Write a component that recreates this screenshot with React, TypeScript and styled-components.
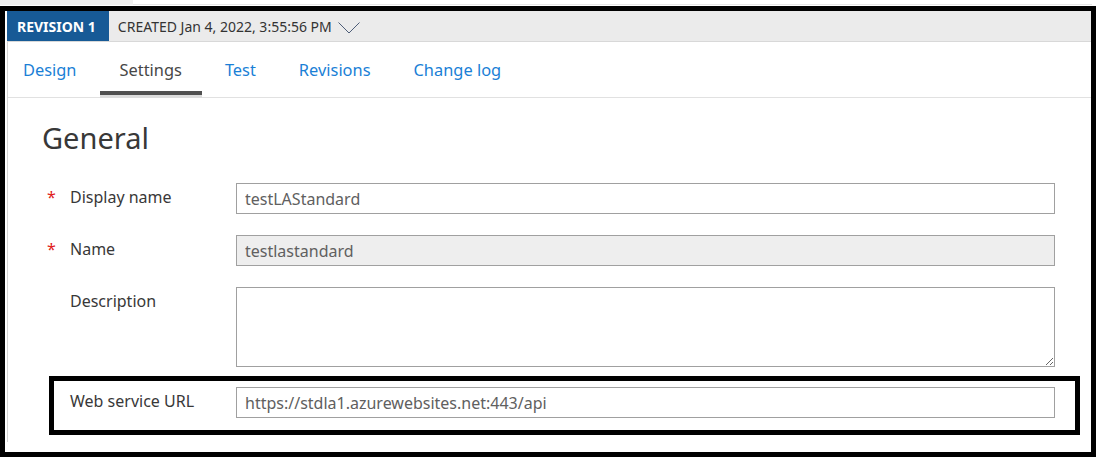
import styled, { createGlobalStyle } from 'styled-components'

const GlobalStyle = createGlobalStyle`
  html, body {
    margin: 0;
    padding: 0;
    background: #ffffff;
  }

  body {
    font-family: 'Noto Sans', 'Open Sans', sans-serif;
    color: #333333;
  }
`

const tabs = ['Design', 'Settings', 'Test', 'Revisions', 'Change log']

export default function App() {
  return (
    <>
      <GlobalStyle />
      <TopStrip>
        <TopStripShade />
        <TopStripLine />
      </TopStrip>
      <Frame>
        <RevisionBar>
          <RevisionBadge>REVISION 1</RevisionBadge>
          <CreatedText>CREATED Jan 4, 2022, 3:55:56 PM</CreatedText>
          <Chevron width='22' height='12' viewBox='0 0 22 12'>
            <polyline points='0.5,0.5 11,11 21.5,0.5' />
          </Chevron>
        </RevisionBar>
        <Panel>
          <TabBar>
            {tabs.map((tab) => (
              <Tab key={tab} $active={tab === 'Settings'}>
                {tab}
              </Tab>
            ))}
          </TabBar>
          <Section>
            <Heading>General</Heading>
            <Form>
              <Row>
                <Required>*</Required>
                <Label>Display name</Label>
                <TextInput defaultValue='testLAStandard' />
              </Row>
              <Row>
                <Required>*</Required>
                <Label>Name</Label>
                <TextInput defaultValue='testlastandard' $disabled readOnly />
              </Row>
              <Row>
                <Required />
                <Label>Description</Label>
                <TextArea />
              </Row>
              <Highlight>
                <HighlightedRow>
                  <Required />
                  <Label>Web service URL</Label>
                  <TextInput defaultValue='https://stdla1.azurewebsites.net:443/api' />
                </HighlightedRow>
              </Highlight>
            </Form>
          </Section>
        </Panel>
      </Frame>
    </>
  )
}

const TopStrip = styled.div`
  display: flex;
  height: 6px;
  width: 1092px;
`

const TopStripShade = styled.div`
  width: 133px;
  height: 5px;
  background: #f0f0f0;
`

const TopStripLine = styled.div`
  flex: 1;
  height: 4px;
  border-bottom: 1px solid #e6e6e6;
`

const Frame = styled.div`
  width: 1096px;
  box-sizing: border-box;
  border: 5px solid #000000;
  padding: 0 0 10px 2px;
`

const RevisionBar = styled.div`
  display: flex;
  align-items: center;
  height: 30px;
  background: #ebebeb;
  border-bottom: 1px solid #d8d8d8;
`

const RevisionBadge = styled.div`
  display: flex;
  align-items: center;
  height: 100%;
  padding: 0 13px 0 10px;
  background: #175a96;
  color: #ffffff;
  font-size: 14px;
  font-weight: 700;
`

const CreatedText = styled.span`
  margin-left: 9px;
  font-size: 14px;
  color: #333333;
`

const Chevron = styled.svg`
  margin-left: 6px;
  margin-top: 3px;
  fill: none;
  stroke: #4d5d78;
  stroke-width: 1;
`

const Panel = styled.div`
  border-left: 1px solid #d4d4d4;
`

const TabBar = styled.div`
  display: flex;
  gap: 3px;
  height: 55px;
  border-bottom: 1px solid #e1e1e1;
`

const Tab = styled.div<{ $active?: boolean }>`
  position: relative;
  display: flex;
  align-items: center;
  padding: 0 20px;
  font-size: 16.4px;
  color: ${({ $active }) => ($active ? '#474747' : '#1a7fd6')};

  &:first-child {
    padding-left: 15px;
  }

  &::after {
    content: '';
    display: ${({ $active }) => ($active ? 'block' : 'none')};
    position: absolute;
    left: 0;
    right: 0;
    bottom: -1px;
    height: 3px;
    border-top: 4px solid #505050;
    background: #dcdcdc;
  }
`

const Section = styled.div`
  padding: 20px 36px 7px 39px;
`

const Heading = styled.h2`
  margin: 0 0 25px -5px;
  font-size: 29px;
  line-height: 40px;
  font-weight: 400;
  color: #383838;
`

const Form = styled.div`
  display: flex;
  flex-direction: column;
  gap: 21px;
`

const Row = styled.div`
  display: flex;
  align-items: flex-start;
`

const HighlightedRow = styled(Row)`
  margin-left: -7px;
`

const Highlight = styled.div`
  margin: -12px -25px 0 2px;
  border: 5px solid #000000;
  padding: 6px 20px 12px 0;
`

const Required = styled.span`
  width: 23px;
  flex-shrink: 0;
  padding-top: 3px;
  font-size: 16px;
  line-height: 22px;
  color: #e0201a;
`

const Label = styled.span`
  width: 166px;
  flex-shrink: 0;
  padding-top: 3px;
  font-size: 16px;
  line-height: 22px;
  color: #383838;
`

const TextInput = styled.input<{ $disabled?: boolean }>`
  flex: 1;
  min-width: 0;
  height: 31px;
  box-sizing: border-box;
  padding: 0 8px;
  border: 1px solid #a0a0a0;
  border-radius: 0;
  background: ${({ $disabled }) => ($disabled ? '#eeeeee' : '#ffffff')};
  font-family: 'Noto Sans', 'Open Sans', sans-serif;
  font-size: 16px;
  color: #606060;
  outline: none;
`

const TextArea = styled.textarea`
  flex: 1;
  min-width: 0;
  height: 80px;
  box-sizing: border-box;
  margin: 0;
  padding: 4px 8px;
  border: 1px solid #a0a0a0;
  border-radius: 0;
  font-family: 'Noto Sans', 'Open Sans', sans-serif;
  font-size: 16px;
  color: #606060;
  outline: none;
`
